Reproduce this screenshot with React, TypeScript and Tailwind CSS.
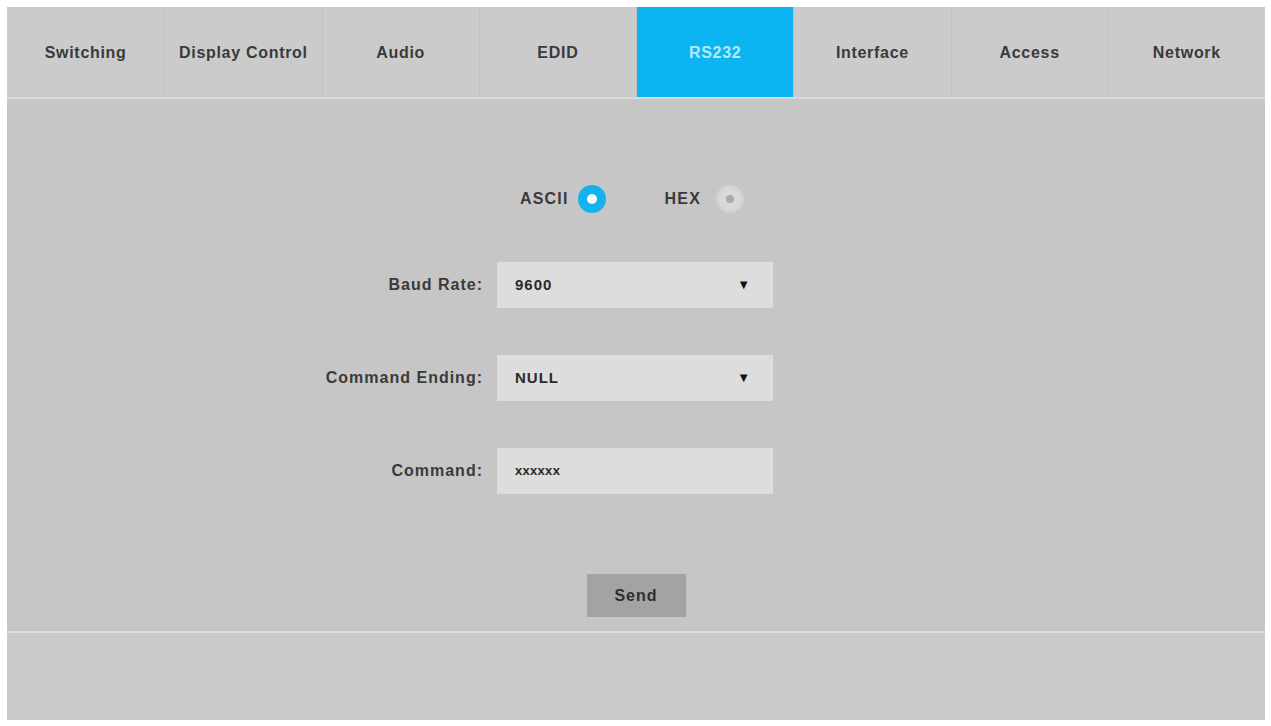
import { useState } from "react";

const TABS = ["Switching", "Display Control", "Audio", "EDID", "RS232", "Interface", "Access", "Network"];

function Radio({ label, checked, onClick }: { label: string; checked: boolean; onClick: () => void }) {
  return (
    <button onClick={onClick} className="flex items-center text-[16px] font-bold tracking-[1.2px] text-[#3a3a3a]">
      <span>{label}</span>
      {checked ? (
        <span className="ml-[9px] flex h-[28px] w-[28px] items-center justify-center rounded-full bg-[#14b3ef]">
          <span className="h-[10px] w-[10px] rounded-full bg-white" />
        </span>
      ) : (
        <span className="ml-[15px] flex h-[28px] w-[28px] items-center justify-center rounded-full bg-[radial-gradient(circle,#d9d9d9_45%,#cfcfcf_75%,#c8c8c8_100%)]">
          <span className="h-[8px] w-[8px] rounded-full bg-[#a9a9a9]" />
        </span>
      )}
    </button>
  );
}

function Row({ label, children }: { label: string; children: React.ReactNode }) {
  return (
    <div className="grid grid-cols-[476px_276px] items-center gap-[14px]">
      <span className="text-right text-[16px] font-bold tracking-[1px] text-[#3a3a3a]">{label}</span>
      {children}
    </div>
  );
}

function Select({ value }: { value: string }) {
  return (
    <div className="flex h-[46px] items-center justify-between bg-[#dddddd] pl-[18px] pr-[23px] text-[15px] font-bold tracking-[1px] text-[#2a2a2a]">
      <span>{value}</span>
      <span className="text-[13px] tracking-normal text-[#111]">▼</span>
    </div>
  );
}

export default function App() {
  const [active, setActive] = useState("RS232");
  const [mode, setMode] = useState<"ascii" | "hex">("ascii");

  return (
    <div className="h-[726px] w-[1271px] bg-white p-[7px] pr-[6px] pb-[6px] font-['Liberation_Sans',Arial,sans-serif]">
      <div className="flex h-full flex-col bg-[#c8c8c8]">
        {/* Tabs */}
        <div className="grid h-[92px] grid-cols-8 border-b-2 border-[#d9d9d9] bg-[#cbcbcb]">
          {TABS.map((t, i) => (
            <button
              key={t}
              onClick={() => setActive(t)}
              className={`flex items-center justify-center pt-[2px] text-[16px] font-bold tracking-[0.7px] ${
                i > 0 ? "border-l border-[#c2c2c2]" : ""
              } ${t === active ? "bg-[#0cb4f2] text-[#b5eafd]" : "text-[#3a3a3a]"}`}
            >
              {t}
            </button>
          ))}
        </div>

        {/* Panel */}
        <div className="flex h-[534px] flex-col items-center border-b-2 border-[#dcdcdc] bg-[#c6c6c6]">
          <div className="mt-[86px] flex gap-[59px] pr-[8px]">
            <Radio label="ASCII" checked={mode === "ascii"} onClick={() => setMode("ascii")} />
            <Radio label="HEX" checked={mode === "hex"} onClick={() => setMode("hex")} />
          </div>

          <div className="mt-[49px] flex flex-col gap-[47px] self-start">
            <Row label="Baud Rate:">
              <Select value="9600" />
            </Row>
            <Row label="Command Ending:">
              <Select value="NULL" />
            </Row>
            <Row label="Command:">
              <div className="flex h-[46px] items-center bg-[#dddddd] pl-[18px] text-[13px] font-bold tracking-[0.3px] text-[#2a2a2a]">xxxxxx</div>
            </Row>
          </div>

          <button className="mt-[80px] h-[43px] w-[99px] bg-[#a3a3a3] text-[16px] font-bold tracking-[1px] text-[#2e2e2e]">Send</button>
        </div>

        <div className="flex-1 bg-[#c9c9c9]" />
      </div>
    </div>
  );
}
